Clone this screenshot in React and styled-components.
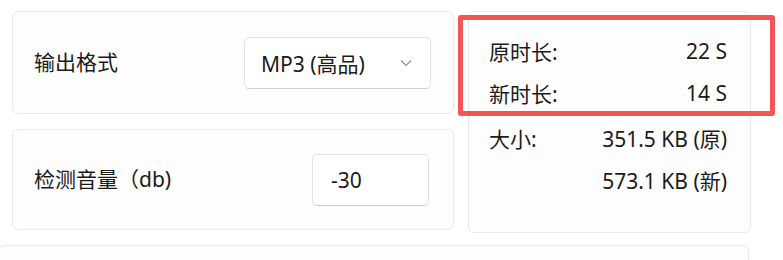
import React from "react";
import styled, { createGlobalStyle } from "styled-components";

const Global = createGlobalStyle`
  html, body { margin: 0; padding: 0; background: #ffffff; }
  body {
    font-family: "Noto Sans", "Noto Sans CJK SC", sans-serif;
    color: #1b1b1b;
    overflow: hidden;
  }
`;

const Page = styled.div`
  width: 783px;
  height: 260px;
  box-sizing: border-box;
  padding: 11px 0 0 12px;
  overflow: hidden;
`;

const Grid = styled.div`
  display: grid;
  grid-template-columns: 442px 283px;
  grid-template-rows: 103px 101px;
  column-gap: 14px;
  row-gap: 15px;
`;

const Card = styled.div`
  box-sizing: border-box;
  background: #fdfdfd;
  border: 1px solid #e9e9e9;
  border-radius: 6px;
`;

const SettingCard = styled(Card)`
  display: flex;
  align-items: center;
  justify-content: space-between;
  padding: 0 ${(p) => p.$pr}px 0 21px;
`;

const Label = styled.span`
  font-size: 21px;
  line-height: 1;
`;

const Select = styled.div`
  box-sizing: border-box;
  width: 187px;
  height: 52px;
  display: flex;
  align-items: center;
  justify-content: space-between;
  padding: 0 18px 0 16px;
  background: #ffffff;
  border: 1px solid #e3e3e3;
  border-bottom-color: #cfcfcf;
  border-radius: 5px;
  font-size: 21px;
`;

const Input = styled.div`
  box-sizing: border-box;
  width: 117px;
  height: 52px;
  display: flex;
  align-items: center;
  padding: 0 18px;
  background: #ffffff;
  border: 1px solid #e3e3e3;
  border-bottom-color: #cfcfcf;
  border-radius: 5px;
  font-size: 21px;
`;

const InfoCard = styled(Card)`
  grid-column: 2;
  grid-row: 1 / span 2;
  height: 222px;
  position: relative;
  padding: 18px 23px 0 20px;
`;

const InfoGroup = styled.div`
  display: grid;
  grid-template-columns: auto 1fr;
  grid-auto-rows: 42px;
  align-items: center;
  margin-top: ${(p) => p.$mt || 0}px;
  font-size: 21px;
`;

const Value = styled.span`
  grid-column: 2;
  text-align: right;
`;

const Highlight = styled.div`
  position: absolute;
  left: -11px;
  top: 3px;
  width: 317px;
  height: 101px;
  box-sizing: border-box;
  border: 5px solid #f25555;
  border-radius: 3px;
  pointer-events: none;
`;

const BottomCard = styled(Card)`
  margin: 15px 0 0 -14px;
  width: 751px;
  height: 40px;
`;

const Chevron = () => (
  <svg width="12" height="8" viewBox="0 0 12 8" fill="none">
    <path d="M1 1.5 L6 6.5 L11 1.5" stroke="#8a8a8a" strokeWidth="1.1" />
  </svg>
);

export default function App() {
  return (
    <>
      <Global />
      <Page>
        <Grid>
          <SettingCard $pr={22}>
            <Label>输出格式</Label>
            <Select>
              <span>MP3 (高品)</span>
              <Chevron />
            </Select>
          </SettingCard>
          <InfoCard>
            <InfoGroup>
              <span>原时长:</span>
              <Value>22 S</Value>
              <span>新时长:</span>
              <Value>14 S</Value>
            </InfoGroup>
            <InfoGroup $mt={3}>
              <span>大小:</span>
              <Value>351.5 KB (原)</Value>
              <Value>573.1 KB (新)</Value>
            </InfoGroup>
            <Highlight />
          </InfoCard>
          <SettingCard $pr={24}>
            <Label>检测音量（db)</Label>
            <Input>-30</Input>
          </SettingCard>
        </Grid>
        <BottomCard />
      </Page>
    </>
  );
}
